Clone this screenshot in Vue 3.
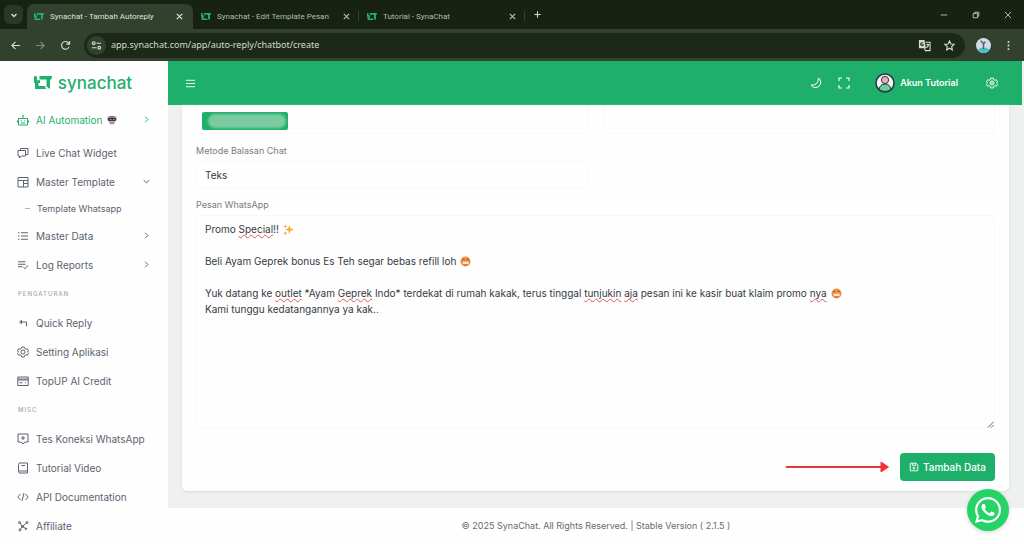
<script setup>
import { ref, computed } from 'vue'

const tabs = [
  { title: 'Synachat - Tambah Autoreply', active: true },
  { title: 'Synachat - Edit Template Pesan', active: false },
  { title: 'Tutorial - SynaChat', active: false },
]
const url = ref('app.synachat.com/app/auto-reply/chatbot/create')

const groups = [
  {
    title: '',
    items: [
      { label: 'AI Automation', icon: 'bot', active: true, robot: true, arrow: 'right' },
      { label: 'Live Chat Widget', icon: 'chat' },
      { label: 'Master Template', icon: 'layout', arrow: 'down' },
      { label: 'Template Whatsapp', sub: true },
      { label: 'Master Data', icon: 'list', arrow: 'right' },
      { label: 'Log Reports', icon: 'log', arrow: 'right' },
    ],
  },
  {
    title: 'PENGATURAN',
    items: [
      { label: 'Quick Reply', icon: 'reply' },
      { label: 'Setting Aplikasi', icon: 'gear' },
      { label: 'TopUP AI Credit', icon: 'card' },
    ],
  },
  {
    title: 'MISC',
    items: [
      { label: 'Tes Koneksi WhatsApp', icon: 'test' },
      { label: 'Tutorial Video', icon: 'book' },
      { label: 'API Documentation', icon: 'code' },
      { label: 'Affiliate', icon: 'network' },
    ],
  },
]

const icons = {
  bot: 'M3 9h18v13H3zM12 9V4M10.500 3h3M1 13v4M23 13v4M8.500 12.500v2M15.500 12.500v2M8 18h8',
  chat: 'M7 7V3h15v12h-4M2 7h15v11H9l-4 4v-4H2z',
  layout: 'M2 3h20v19H2zM2 9h20M13 9v13M13 15h9',
  list: 'M2 5.500h3M2 12h3M2 18.500h3M8 5.500h14M8 12h14M8 18.500h14',
  log: 'M2 5.500h15M2 10.500h15M2 15.500h9M13 16.500l3 3 6-7',
  reply: 'M9 6.500L5 10l4 3.500zM9 10h10v9',
  gear: 'M9.500 2h5l.7 3 2.600 1.500 3-1 2.400 4.200-2.300 2.300 2.300 2.300-2.400 4.200-3-1-2.600 1.500-.7 3h-5l-.7-3-2.600-1.500-3 1L.800 14.300 3.100 12 .8 9.700l2.400-4.200 3 1L8.800 5zM12 8a4 4 0 1 0 0 8 4 4 0 0 0 0-8z',
  card: 'M1.500 4h21v17h-21zM2 8h20M2 10h20M5 15.500h6M16 15.500h2',
  test: 'M2 2h20v16h-6l-4 4-4-4H2zM12 6v8M8 10h8',
  book: 'M6 2h15v20H6a3 3 0 0 1-3-3V5a3 3 0 0 1 3-3zM3 18h18M9 7h7',
  code: 'M7 6l-5.500 6L7 18M17 6l5.500 6L17 18M14 4l-4 16',
  network: 'M5 5l6 8 9-8M11 13l8 5M11 13l-5 6M5 3a2 2 0 1 0 0 4 2 2 0 0 0 0-4zM20 3a2 2 0 1 0 0 4 2 2 0 0 0 0-4zM11 11a2 2 0 1 0 0 4 2 2 0 0 0 0-4zM18 16a1.500 1.500 0 1 0 0 3 1.500 1.500 0 0 0 0-3zM6 18a2 2 0 1 0 0 4 2 2 0 0 0 0-4z',
}

const message = ref(
  [
    'Promo Special!!',
    '',
    'Beli Ayam Geprek bonus Es Teh segar bebas refill loh',
    '',
    'Yuk datang ke outlet *Ayam Geprek Indo* terdekat di rumah kakak, terus tinggal tunjukin aja pesan ini ke kasir buat klaim promo nya',
    'Kami tunggu kedatangannya ya kak..',
  ].join('\n'),
)
const lineEmoji = { 0: 'sparkles', 2: 'grin', 4: 'grin' }
const flagged = /(Special|outlet|Geprek(?= Indo)|tunjukin|aja|nya$)/
const marks = computed(() =>
  message.value.split('\n').map((line, i) => ({
    emoji: lineEmoji[i],
    parts: line.split(flagged).map((text, k) => ({ text, bad: k % 2 === 1 && text !== '' })),
  })),
)
const method = ref('Teks')
</script>

<template>
  <div class="window">
    <svg class="defs" aria-hidden="true">
      <symbol id="mark" viewBox="0 0 36 30">
        <path d="M11 2h25q0 7-4 8v18l-7-5V9H11zM0 2l6 1v8l6-1v6H9v6h13l2 6H2V16H0z" fill="currentColor" />
      </symbol>
      <symbol id="cross" viewBox="0 0 10 10">
        <path d="M2 2l6 6M8 2L2 8" fill="none" stroke="currentColor" stroke-width="1.300" />
      </symbol>
      <symbol id="sparkles" viewBox="0 0 24 24">
        <path d="M14 2l2.500 7.500L23 12l-6.500 2.500L14 22l-2.500-7.500L5 12l6.500-2.500z" fill="#f9ad38" />
        <path d="M5 1l1 3 3 1-3 1-1 3-1-3-3-1 3-1zM5 16l1 2.500L9 20l-3 1-1 3-1-3-3-1 3-1.500z" fill="#f08b3c" />
      </symbol>
      <symbol id="grin" viewBox="0 0 24 24">
        <circle cx="12" cy="12" r="11" fill="#f3913f" />
        <path d="M4 9q3-5 6 0M14 9q3-5 6 0" fill="none" stroke="#a04a28" stroke-width="2" />
        <path d="M4 12h16q-1 9-8 9t-8-9z" fill="#e0552f" />
        <path d="M5 12h14v6H6z" fill="#fbe6d8" />
      </symbol>
    </svg>

    <header class="browser">
      <div class="strip">
        <button class="tab-search" aria-label="Search tabs">
          <svg viewBox="0 0 10 10"><path d="M2.500 4L5 6.500 7.500 4" fill="none" stroke="currentColor" stroke-width="1.400" /></svg>
        </button>
        <div v-for="t in tabs" :key="t.title" class="tab" :class="{ active: t.active }">
          <button class="tab-title"><svg class="fav"><use href="#mark" /></svg><span>{{ t.title }}</span></button>
          <button class="tab-close" aria-label="Close tab"><svg><use href="#cross" /></svg></button>
        </div>
        <button class="new-tab" aria-label="New tab">
          <svg viewBox="0 0 10 10"><path d="M5 1.500v7M1.500 5h7" stroke="currentColor" stroke-width="1.200" /></svg>
        </button>
        <div class="controls">
          <button aria-label="Minimize"><svg viewBox="0 0 10 10"><path d="M1 5h8" stroke="currentColor" /></svg></button>
          <button aria-label="Restore"><svg viewBox="0 0 10 10" fill="none" stroke="currentColor"><path d="M1.500 3h5.500v5.500H1.500zM3.500 3V1.500h5v5H7" /></svg></button>
          <button aria-label="Close"><svg viewBox="0 0 10 10"><path d="M1 1l8 8M9 1L1 9" stroke="currentColor" /></svg></button>
        </div>
      </div>
      <div class="toolbar">
        <button aria-label="Back"><svg viewBox="0 0 12 12"><path d="M11 6H2M6 2L2 6l4 4" /></svg></button>
        <button class="dim" aria-label="Forward"><svg viewBox="0 0 12 12"><path d="M1 6h9M6 2l4 4-4 4" /></svg></button>
        <button aria-label="Reload"><svg viewBox="0 0 12 12"><path d="M9.800 7.500A4.200 4.200 0 1 1 9 3l1.300 1.300M10.500 1v3.500H7" /></svg></button>
        <div class="address">
          <button class="site" aria-label="Site information">
            <svg viewBox="0 0 12 12"><path d="M6 3.500h5M1 8.500h5M3 2a1.500 1.500 0 1 0 0 3 1.500 1.500 0 0 0 0-3zM9 7a1.500 1.500 0 1 0 0 3 1.500 1.500 0 0 0 0-3z" /></svg>
          </button>
          <input v-model="url" type="text" aria-label="Address" />
          <button class="translate" aria-label="Translate">
            <svg viewBox="0 0 14 14"><path d="M1 1h6l1.500 9H1z" fill="#d5dccf" stroke="none" /><path d="M8 3.500h5v9H8l-1-2.500" /><path d="M5.500 4.500a1.500 1.500 0 1 0 0 2H4.200" stroke="#1c2919" /><path d="M9 6h3M10.500 5v1M11.500 6q-.500 2-2.500 3.500" /></svg>
          </button>
          <button aria-label="Bookmark"><svg viewBox="0 0 12 12"><path d="M6 1l1.500 3.300 3.500.4-2.600 2.400.7 3.600L6 8.900l-3.100 1.800.7-3.600L1 4.700l3.500-.4z" /></svg></button>
        </div>
        <button class="profile" aria-label="Profile">
          <svg viewBox="0 0 16 16"><circle cx="8" cy="8" r="8" fill="#cfdbe9" stroke="none" /><path d="M1.400 12.500Q8 8 14.600 12.500A8 8 0 0 1 1.400 12.500z" fill="#48bfc9" stroke="none" /><path d="M5 3l3 3 2-2M8 6v6" stroke="#5b5f63" stroke-width="1.600" /></svg>
        </button>
        <button class="more" aria-label="Menu"><svg viewBox="0 0 12 12"><path d="M6 1v2M6 5v2M6 9v2" stroke-width="1.800" /></svg></button>
      </div>
    </header>

    <div class="app">
      <aside class="sidebar">
        <a class="brand" href="#"><svg><use href="#mark" /></svg><span>synachat</span></a>
        <nav>
          <section v-for="g in groups" :key="g.title">
            <h2 v-if="g.title">{{ g.title }}</h2>
            <a v-for="it in g.items" :key="it.label" href="#" :class="{ active: it.active, sub: it.sub }">
              <i v-if="it.sub" class="dash"></i>
              <svg v-else class="ico" viewBox="0 0 24 24"><path :d="icons[it.icon]" /></svg>
              <span>{{ it.label }}</span>
              <svg v-if="it.robot" class="robot" viewBox="0 0 22 22">
                <path d="M4 4q7-5 14 0l1 6H3z" fill="#7c7088" />
                <path d="M1 2l4 3v6H1zM21 2l-4 3v6h4z" fill="#e88d68" />
                <path d="M2 7h18v6H2z" fill="#28303d" />
                <path d="M4 13h14l-2 8H6z" fill="#b9a9b6" />
                <path d="M6 9h4v2H6zM13 9h4v2h-4z" fill="#6aa9d6" />
                <path d="M8 16h6v2H8z" fill="#d3505a" />
              </svg>
              <svg v-if="it.arrow" class="arrow" viewBox="0 0 10 10">
                <path :d="it.arrow === 'right' ? 'M3 1l4 4-4 4' : 'M1 3l4 4 4-4'" />
              </svg>
            </a>
          </section>
        </nav>
      </aside>

      <div class="page">
        <header class="topbar">
          <button aria-label="Toggle menu"><svg class="sm" viewBox="0 0 12 12"><path d="M1 2.500h10M1 6h10M1 9.500h10" /></svg></button>
          <span class="grow"></span>
          <button aria-label="Dark mode"><svg viewBox="0 0 24 24" stroke-width="2"><path d="M17 2a10.500 10.500 0 1 1-15 14q6 1 10-2 5-4 5-12z" /></svg></button>
          <button aria-label="Fullscreen"><svg viewBox="0 0 24 24" stroke-width="2.200"><path d="M2 8V2h6M16 2h6v6M22 16v6h-6M8 22H2v-6" /></svg></button>
          <button class="account">
            <svg viewBox="0 0 20 20"><circle cx="10" cy="10" r="9" fill="#f3f2f5" stroke="#2b3542" stroke-width="1.500" /><path d="M4 16.500Q5 11 10 11t6 5.500Q10 20.500 4 16.500z" fill="#65cf98" stroke="#2b3542" /><circle cx="10" cy="7" r="3.600" fill="#edb0b0" stroke="#2b3542" /></svg>
            <span>Akun Tutorial</span>
          </button>
          <button aria-label="Settings"><svg viewBox="0 0 24 24" stroke-width="1.800"><path :d="icons.gear" /><circle cx="12" cy="12" r="1" /></svg></button>
        </header>

        <main>
          <form class="card" @submit.prevent>
            <div class="row">
              <div class="tags"><span class="tag"></span></div>
              <input class="box" type="text" aria-label="Kata kunci" />
            </div>
            <div class="row">
              <div class="field">
                <label for="method">Metode Balasan Chat</label>
                <select id="method" v-model="method" class="box"><option>Teks</option></select>
              </div>
            </div>
            <label for="message">Pesan WhatsApp</label>
            <div class="editor">
              <div class="marks" aria-hidden="true">
                <div v-for="(l, i) in marks" :key="i" class="line"><template v-for="(p, k) in l.parts" :key="k"><span :class="{ bad: p.bad }">{{ p.text }}</span></template><svg v-if="l.emoji" class="emoji"><use :href="'#' + l.emoji" /></svg></div>
              </div>
              <textarea id="message" v-model="message" spellcheck="false"></textarea>
              <svg class="grip" viewBox="0 0 8 8"><path d="M1 7.500L7.500 1M4.500 7.500l3-3" stroke="#555" fill="none" /></svg>
            </div>
            <div class="actions">
              <svg class="pointer" viewBox="0 0 104 12"><path d="M1.500 6H96" stroke="#e23b3d" stroke-width="2" stroke-linecap="round" /><path d="M96 1v10l7.500-5z" fill="#f5323a" stroke="#f5323a" stroke-linejoin="round" /></svg>
              <button type="submit" class="submit">
                <svg viewBox="0 0 24 24"><path d="M3 3h14l4 4v14H3zM8 3v5h8V3M12 11v7M8.500 14.500h7" /></svg>
                <span>Tambah Data</span>
              </button>
            </div>
          </form>
        </main>

        <footer>© 2025 SynaChat. All Rights Reserved. | Stable Version ( 2.1.5 )</footer>
      </div>
    </div>

    <a class="whatsapp" href="#" aria-label="WhatsApp">
      <svg viewBox="0 0 448 512"><path fill="#fff" d="M380.900 97.100C339 55.100 283.200 32 223.900 32c-122.400 0-222 99.600-222 222 0 39.100 10.200 77.300 29.600 111L0 480l117.700-30.900c32.400 17.700 68.900 27 106.100 27h.1c122.300 0 224.100-99.600 224.100-222 0-59.300-25.200-115-67.100-157zm-157 341.600c-33.200 0-65.700-8.900-94-25.700l-6.700-4-69.800 18.300L72 359.200l-4.400-7c-18.500-29.400-28.200-63.300-28.200-98.200 0-101.700 82.800-184.500 184.600-184.500 49.300 0 95.600 19.200 130.400 54.100 34.800 34.900 56.200 81.200 56.100 130.500 0 101.800-84.900 184.600-186.600 184.600zm101.200-138.200c-5.500-2.800-32.800-16.200-37.900-18-5.100-1.900-8.800-2.800-12.500 2.800-3.700 5.600-14.300 18-17.600 21.800-3.200 3.700-6.500 4.200-12 1.400-32.600-16.300-54-29.100-75.500-66-5.700-9.800 5.700-9.100 16.300-30.300 1.800-3.700.9-6.900-.5-9.700-1.400-2.800-12.500-30.100-17.100-41.200-4.500-10.800-9.100-9.300-12.500-9.500-3.200-.2-6.900-.2-10.600-.2-3.700 0-9.700 1.400-14.800 6.900-5.100 5.600-19.400 19-19.400 46.300 0 27.300 19.900 53.700 22.600 57.400 2.800 3.700 39.100 59.700 94.800 83.800 35.200 15.200 49 16.500 66.600 13.900 10.700-1.600 32.800-13.400 37.400-26.400 4.600-13 4.600-24.100 3.200-26.400-1.300-2.500-5-3.900-10.500-6.600z" /></svg>
    </a>
  </div>
</template>

<style scoped>
.window { display: flex; flex-direction: column; min-height: 100vh; font: 10px/16px Inter, "Liberation Sans", sans-serif; color: #5c6470; }
.defs { position: absolute; width: 0; height: 0; }
button, input, select, textarea { font: inherit; color: inherit; border: 0; background: none; padding: 0; margin: 0; outline: 0; box-sizing: border-box; }
button { display: flex; align-items: center; justify-content: center; flex: none; }
a { color: inherit; text-decoration: none; }
svg { flex: none; }

.browser { background: #172214; color: #d5dccf; }
.strip { display: flex; align-items: center; height: 29px; padding-left: 4px; font-family: Roboto, "Noto Sans", sans-serif; font-size: 8px; }
.tab-search { width: 19px; height: 19px; border-radius: 6px; background: #2a3827; margin-right: 4px; }
.tab-search svg { width: 10px; height: 10px; }
.tab { position: relative; display: flex; align-items: center; width: 166px; box-sizing: border-box; padding: 0 8px; height: 25px; align-self: flex-end; color: #b3bdae; }
.tab:not(.active)::after { content: ""; position: absolute; right: 0; top: 7px; width: 1px; height: 10px; background: #34432f; }
.tab.active { background: #31412d; border-radius: 7px 7px 0 0; color: #dce3d8; padding: 0 9px 0 7px; }
.tab-title { gap: 6px; flex: 1; min-width: 0; justify-content: flex-start; white-space: nowrap; }
.fav { width: 10px; height: 9px; color: #21b26d; }
.tab-close svg { width: 9px; height: 9px; }
.new-tab { width: 24px; height: 24px; }
.new-tab svg { width: 9px; height: 9px; }
.controls { display: flex; margin-left: auto; }
.controls button { width: 32px; height: 24px; }
.controls svg { width: 8px; height: 8px; }
.toolbar { display: flex; align-items: center; height: 32px; padding: 0 3px; background: #31412d; }
.toolbar button { width: 24px; height: 24px; margin-right: 1px; }
.toolbar svg { width: 11px; height: 11px; fill: none; stroke: currentColor; stroke-width: 1.2; }
.toolbar .dim { color: #7f8c7a; }
.address { display: flex; align-items: center; flex: 1; height: 25px; margin-left: 6px; border-radius: 13px; background: #1c2919; padding: 0 3px; }
.address .site { width: 19px; height: 19px; border-radius: 50%; background: #31412d; }
.address input { flex: 1; min-width: 0; font-family: "Noto Sans", "Open Sans", sans-serif; font-size: 9px; margin-left: 4px; }
.toolbar .translate svg { width: 13px; height: 13px; }
.toolbar .profile { margin-left: 6px; }
.toolbar .profile svg { width: 15px; height: 15px; }

.app { display: flex; flex: 1; background: #eff1f0; }
.sidebar { width: 168px; flex: none; background: #fefefe; }
.brand { display: flex; align-items: center; justify-content: center; gap: 6px; height: 43px; margin-bottom: 1px; color: #21b06c; font-size: 17px; font-weight: 500; padding-right: 2px; }
.brand svg { width: 18px; height: 15px; }
nav a { display: flex; align-items: center; height: 29px; padding: 0 18px 0 17px; }
nav a.active { color: #21b06c; margin-bottom: 4px; }
nav a.sub { height: 25px; font-size: 9px; }
.ico { width: 12px; height: 12px; margin-right: 7px; fill: none; stroke: currentColor; stroke-width: 2; }
.dash { width: 5px; height: 1px; background: #b2b6bc; margin: 0 7px 0 8px; }
.robot { width: 10px; height: 10px; margin-left: 5px; }
.arrow { width: 7px; height: 7px; margin-left: auto; fill: none; stroke: currentColor; stroke-width: 1.4; }
h2 { margin: 0; padding-left: 18px; height: 29px; line-height: 29px; font-size: 6px; font-weight: 500; letter-spacing: 1px; color: #a5a9af; }

.page { display: flex; flex-direction: column; flex: 1; min-width: 0; }
.topbar { display: flex; align-items: center; height: 44px; margin-right: 2px; padding: 0 24px 0 17px; background: #1eb06b; color: #fff; }
.topbar svg { width: 12px; height: 12px; fill: none; stroke: currentColor; }
.topbar .sm { width: 11px; height: 11px; }
.topbar button + button { margin-left: 16px; }
.topbar .grow { flex: 1; }
.topbar .account { margin: 0 28px 0 25px; gap: 5px; font-weight: 600; font-size: 9px; }
.topbar .account + button { margin-left: 0; }
.topbar .account svg { width: 20px; height: 20px; }
main { display: flex; flex: 1; padding: 0 15px 17px 14px; }
.card { display: flex; flex-direction: column; flex: 1; min-width: 0; box-sizing: border-box; padding: 0 14px 10px; background: #fefefe; border-radius: 0 0 5px 5px; box-shadow: 0 1px 3px #d9dcdb; }
.row { display: grid; grid-template-columns: 1fr 1fr; gap: 16px; }
.tags, .row > .box { height: 29px; border: 1px solid #f8f8fa; border-top: 0; border-radius: 0 0 4px 4px; box-sizing: border-box; }
.tags { padding: 7px 5px 0; }
.tag { display: block; width: 86px; height: 18px; border-radius: 2px; background: #1eb06b; overflow: hidden; }
.tag::before { content: ""; display: block; height: 14px; margin: 2px 2px 2px 6px; border-radius: 7px; background: #7cca9f; filter: blur(1px); }
label { display: block; margin-top: 9px; font-size: 9px; line-height: 16px; color: #777c84; }
.box { width: 100%; color: #343a42; }
select.box { height: 27px; display: block; margin-top: 2px; appearance: none; padding: 0 8px; border: 1px solid #f8f8fa; border-radius: 4px; }
.editor { position: relative; display: flex; flex: 1; min-height: 214px; margin-top: 2px; color: #343a42; }
.editor textarea, .marks { flex: 1; width: 100%; padding: 5px 8px; border: 1px solid #f8f8fa; border-radius: 4px; resize: none; white-space: pre-wrap; box-sizing: border-box; }
.marks { position: absolute; inset: 0; color: transparent; border-color: transparent; pointer-events: none; }
.line { min-height: 16px; }
.bad { text-decoration: underline wavy #e2555b 1px; text-underline-offset: 1px; text-decoration-skip-ink: none; }
.emoji { width: 11px; height: 11px; margin-left: 4px; vertical-align: -2px; }
.grip { position: absolute; right: 1px; bottom: 1px; width: 7px; height: 7px; }
.actions { display: flex; justify-content: flex-end; align-items: center; gap: 11px; margin-top: 24px; }
.pointer { width: 104px; height: 12px; }
.submit { height: 28px; padding: 0 9px; gap: 4px; border-radius: 4px; background: #1eb06b; color: #fff; font-weight: 500; }
.submit svg { width: 10px; height: 10px; fill: none; stroke: currentColor; stroke-width: 2.2; }
footer { display: flex; align-items: center; justify-content: center; height: 36px; background: #fefefe; font-size: 9px; color: #666b72; }
.whatsapp { position: fixed; right: 15px; bottom: 13px; width: 42px; height: 42px; border-radius: 50%; background: #25d366; display: flex; align-items: center; justify-content: center; box-shadow: 0 1px 4px #cdd2d0; }
.whatsapp svg { width: 26px; height: 30px; }
</style>

<style>
body { margin: 0; background: #eff1f0; }
</style>
